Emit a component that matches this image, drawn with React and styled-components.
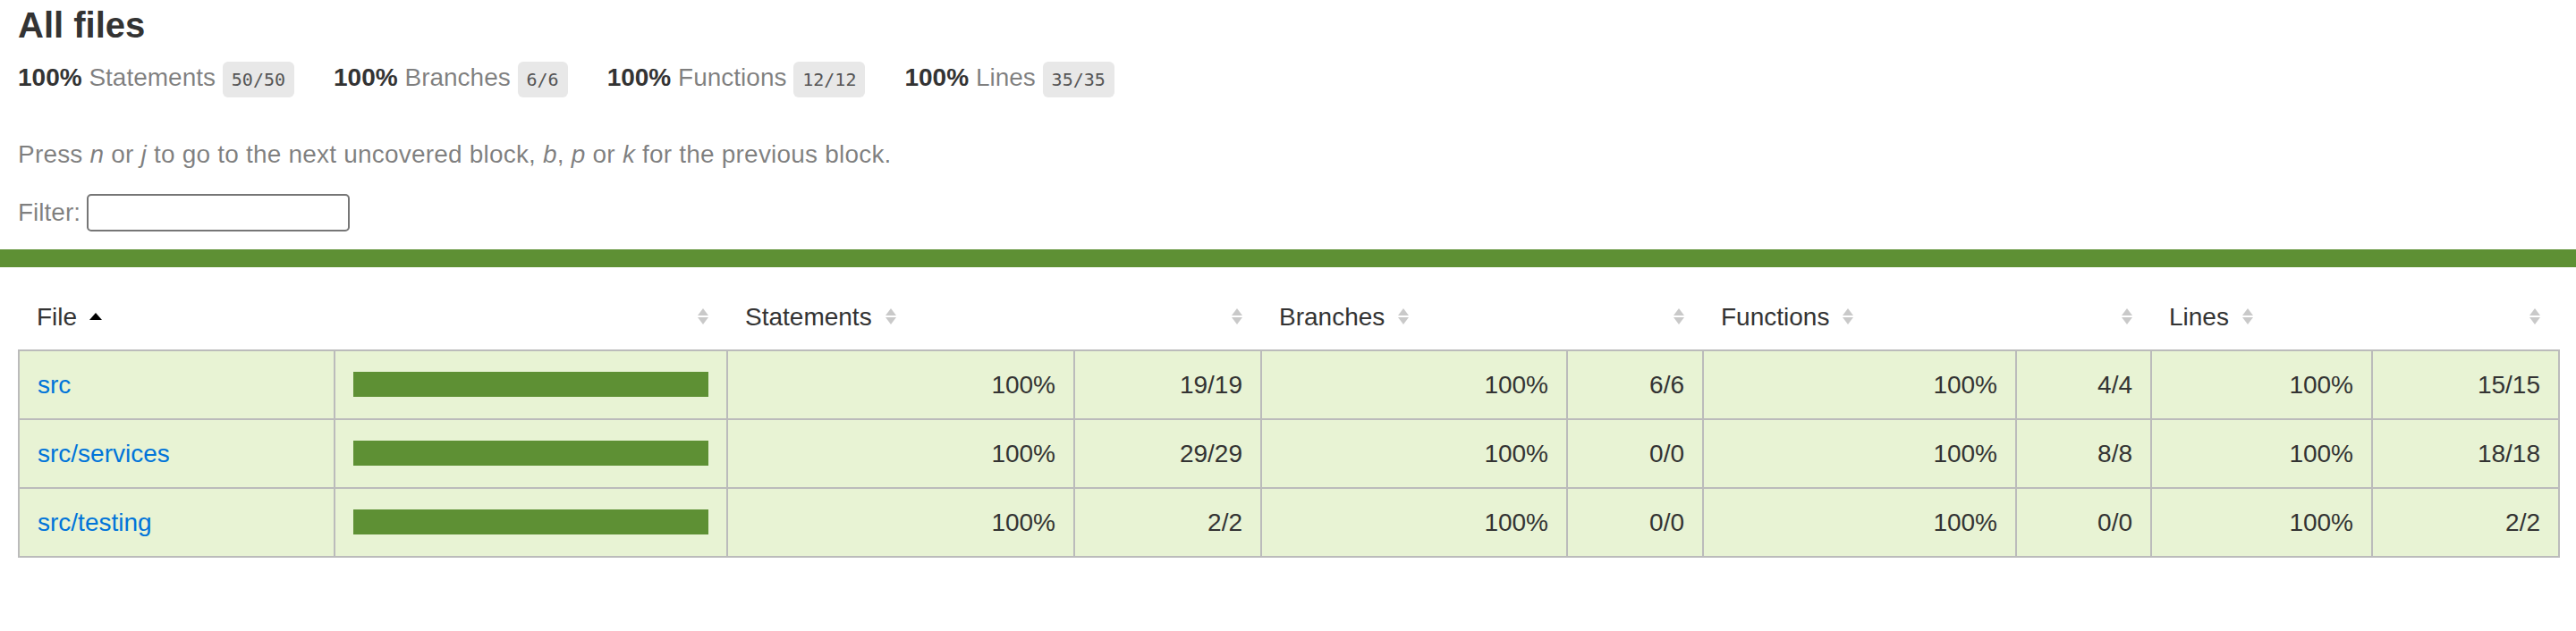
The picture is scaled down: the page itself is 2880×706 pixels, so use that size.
import React from 'react'
import styled, { createGlobalStyle } from 'styled-components'

const colors = {
    text: '#333',
    quiet: 'rgba(0, 0, 0, 0.5)',
    link: '#0074d9',
    green: '#5e9034',
    greenLight: '#e8f3d4',
    border: '#bbb',
}

const GlobalStyle = createGlobalStyle`
    *, *::before, *::after {
        box-sizing: border-box;
    }
    html, body {
        margin: 0;
        padding: 0;
        background: #fff;
    }
    body {
        font-family: "Liberation Sans", Arial, Helvetica, sans-serif;
        font-size: 28px;
        color: ${colors.text};
    }
`

const Header = styled.div`
    padding: 5px 20px 20px;
`

const Title = styled.h1`
    margin: 0;
    font-size: 40px;
    line-height: 46px;
    font-weight: bold;
`

const Stats = styled.div`
    display: flex;
    flex-wrap: wrap;
`

const Stat = styled.div`
    padding: 20px 44px 20px 0;
    line-height: 32px;
    white-space: nowrap;
`

const Strong = styled.span`
    font-weight: bold;
`

const Quiet = styled.span`
    color: ${colors.quiet};
`

const Fraction = styled.span`
    font-family: "DejaVu Sans Mono", "Liberation Mono", Menlo, monospace;
    font-size: 20px;
    color: #555;
    background: #e8e8e8;
    padding: 8px 10px;
    border-radius: 6px;
    vertical-align: middle;
`

const Hint = styled.p`
    margin: 32px 0 28px;
    line-height: 32px;
    letter-spacing: 0.2px;
    color: ${colors.quiet};

    & em {
        font-style: italic;
    }
`

const FilterRow = styled.div`
    display: flex;
    align-items: center;
    gap: 7px;
    color: ${colors.quiet};
`

const SearchInput = styled.input`
    width: 294px;
    height: 42px;
    border: 2px solid #767676;
    border-radius: 5px;
    background: #fff;
    font-size: 26px;
    padding: 0 6px;
    outline: none;
`

const StatusLine = styled.div`
    height: 20px;
    background: ${colors.green};
`

const TableWrap = styled.div`
    padding: 20px;
`

const Table = styled.table`
    width: 100%;
    border-collapse: collapse;
    table-layout: fixed;
`

const Col = styled.col`
    width: ${(p) => p.$w}px;
`

const HeadRow = styled.tr`
    border-bottom: 2px solid ${colors.border};
`

const HeadCell = styled.th`
    padding: 20px;
    line-height: 32px;
    font-weight: normal;
    white-space: nowrap;
    text-align: ${(p) => p.$align || 'left'};
`

const Body = styled.tbody`
    border: 2px solid ${colors.border};
`

const Row = styled.tr`
    border-bottom: 2px solid ${colors.border};
`

const Cell = styled.td`
    padding: 20px;
    line-height: 35px;
    white-space: nowrap;
    background: ${colors.greenLight};
    border-right: 2px solid ${colors.border};
    text-align: ${(p) => p.$align || 'left'};

    &:last-child {
        border-right: none;
    }
`

const FileLink = styled.a`
    color: ${colors.link};
    text-decoration: none;
`

const Chart = styled.div`
    line-height: 0;
`

const Fill = styled.div`
    display: inline-block;
    height: 28px;
    background: ${colors.green};
`

const SortIcon = styled.svg`
    display: inline-block;
    width: 14px;
    height: 20px;
    margin-left: 14px;
`

function Sorter({ sorted }) {
    return (
        <SortIcon viewBox="0 0 14 20">
            {sorted ? (
                <polygon points="0,14 7,6 14,14" fill="#000" />
            ) : (
                <>
                    <polygon points="1,9 7,1 13,9" fill="#c9c9c9" />
                    <polygon points="1,11 7,19 13,11" fill="#c9c9c9" />
                </>
            )}
        </SortIcon>
    )
}

const summary = [
    { label: 'Statements', pct: '100%', frac: '50/50' },
    { label: 'Branches', pct: '100%', frac: '6/6' },
    { label: 'Functions', pct: '100%', frac: '12/12' },
    { label: 'Lines', pct: '100%', frac: '35/35' },
]

const files = [
    { name: 'src', pct: 100, stats: ['19/19', '6/6', '4/4', '15/15'] },
    { name: 'src/services', pct: 100, stats: ['29/29', '0/0', '8/8', '18/18'] },
    { name: 'src/testing', pct: 100, stats: ['2/2', '0/0', '0/0', '2/2'] },
]

const colWidths = [353, 439, 388, 209, 342, 152, 350, 151, 247, 209]
const metrics = ['Statements', 'Branches', 'Functions', 'Lines']

export default function App() {
    return (
        <React.Fragment>
            <GlobalStyle />
            <Header>
                <Title>All files</Title>
                <Stats>
                    {summary.map((item) => (
                        <Stat key={item.label}>
                            <Strong>{item.pct} </Strong>
                            <Quiet>{item.label}</Quiet>{' '}
                            <Fraction>{item.frac}</Fraction>
                        </Stat>
                    ))}
                </Stats>
                <Hint>
                    Press <em>n</em> or <em>j</em> to go to the next uncovered
                    block, <em>b</em>, <em>p</em> or <em>k</em> for the previous
                    block.
                </Hint>
                <FilterRow>
                    Filter:
                    <SearchInput type="search" />
                </FilterRow>
            </Header>
            <StatusLine />
            <TableWrap>
                <Table>
                    <colgroup>
                        {colWidths.map((w, i) => (
                            <Col key={i} $w={w} />
                        ))}
                    </colgroup>
                    <thead>
                        <HeadRow>
                            <HeadCell>
                                File
                                <Sorter sorted />
                            </HeadCell>
                            <HeadCell $align="right">
                                <Sorter />
                            </HeadCell>
                            {metrics.map((m) => (
                                <React.Fragment key={m}>
                                    <HeadCell>
                                        {m}
                                        <Sorter />
                                    </HeadCell>
                                    <HeadCell $align="right">
                                        <Sorter />
                                    </HeadCell>
                                </React.Fragment>
                            ))}
                        </HeadRow>
                    </thead>
                    <Body>
                        {files.map((file) => (
                            <Row key={file.name}>
                                <Cell>
                                    <FileLink href="#">{file.name}</FileLink>
                                </Cell>
                                <Cell>
                                    <Chart>
                                        <Fill style={{ width: `${file.pct}%` }} />
                                    </Chart>
                                </Cell>
                                {file.stats.map((frac, i) => (
                                    <React.Fragment key={i}>
                                        <Cell $align="right">{file.pct}%</Cell>
                                        <Cell $align="right">{frac}</Cell>
                                    </React.Fragment>
                                ))}
                            </Row>
                        ))}
                    </Body>
                </Table>
            </TableWrap>
        </React.Fragment>
    )
}
